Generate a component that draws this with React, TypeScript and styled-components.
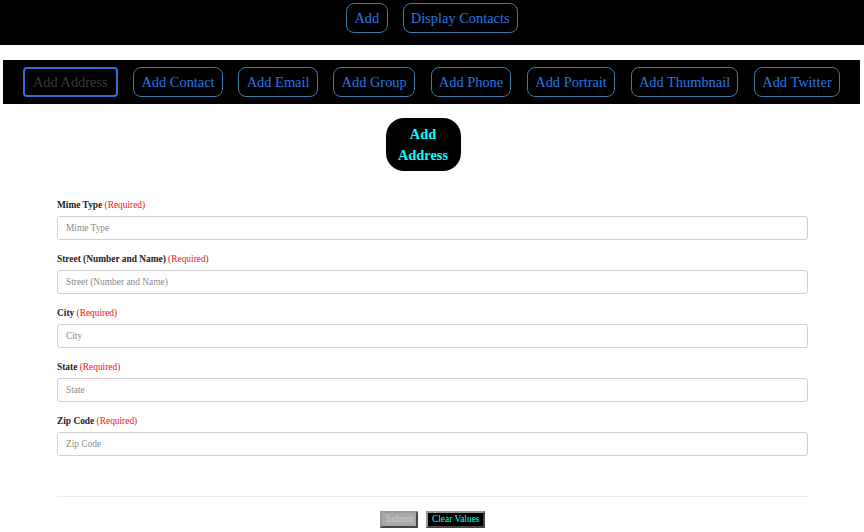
import React from "react";
import styled, { createGlobalStyle } from "styled-components";

const Global = createGlobalStyle`
  body { margin: 0; background: #fff; font-family: "Liberation Serif", "Times New Roman", serif; }
  * { box-sizing: border-box; }
`;

const TopBar = styled.nav`
  background: #000;
  height: 45px;
  display: flex;
  justify-content: center;
  align-items: flex-start;
  gap: 15px;
  padding-top: 3px;
`;

const SubBar = styled.nav`
  background: #000;
  margin: 15px 4px 0 3px;
  height: 44px;
  display: flex;
  justify-content: center;
  align-items: center;
  gap: 15.5px;
`;

const NavButton = styled.button<{ $active?: boolean }>`
  height: 30px;
  padding: 0 ${(p) => (p.$active ? "8px" : "7.3px")};
  background: #000;
  border: ${(p) => (p.$active ? "2px solid #2f6fd0" : "1px solid #3d7aa3")};
  border-radius: ${(p) => (p.$active ? "4px" : "8px")};
  font-family: "Liberation Serif", "Times New Roman", serif;
  font-size: 14.4px;
  color: ${(p) => (p.$active ? "#3a3a3a" : "#2478e0")};
  white-space: nowrap;
  cursor: pointer;
`;

const HeadingWrap = styled.div`
  display: flex;
  justify-content: center;
  margin-top: 14px;
  padding-right: 18px;
`;

const Heading = styled.h2`
  margin: 0;
  background: #000;
  color: #00ffff;
  font-family: "Liberation Serif", "Times New Roman", serif;
  font-size: 14.4px;
  font-weight: bold;
  line-height: 21px;
  text-align: center;
  width: 75px;
  height: 53px;
  padding-top: 5.5px;
  border-radius: 18px;
`;

const Form = styled.form`
  margin: 28px 56px 0 57px;
  display: flex;
  flex-direction: column;
`;

const Group = styled.div`
  display: flex;
  flex-direction: column;
  margin-bottom: 13px;
`;

const Label = styled.label`
  font-size: 9.4px;
  line-height: 13px;
  font-weight: bold;
  color: #222;
  margin-bottom: 4px;
`;

const Required = styled.span`
  color: #ee1111;
  font-weight: normal;
`;

const Input = styled.input`
  height: 24px;
  border: 1px solid #cfcfcf;
  border-radius: 3px;
  padding: 0 8px;
  font-family: "Liberation Serif", "Times New Roman", serif;
  font-size: 9.4px;
  color: #333;
  &::placeholder { color: #8a8a8a; }
`;

const Rule = styled.hr`
  border: none;
  border-top: 1px solid #ececec;
  margin: 27px 0 14px;
  width: 100%;
`;

const Actions = styled.div`
  display: flex;
  justify-content: center;
  gap: 8px;
`;

const ActionButton = styled.button<{ $kind: "submit" | "clear" }>`
  height: 17px;
  padding: 0 4px;
  font-family: "Liberation Serif", "Times New Roman", serif;
  font-size: 9.4px;
  line-height: 13px;
  white-space: nowrap;
  border: 2px outset #9a9a9a;
  background: ${(p) => (p.$kind === "submit" ? "#a8a8a8" : "#000")};
  color: ${(p) => (p.$kind === "submit" ? "#d0d0d0" : "#00ffff")};
  width: ${(p) => (p.$kind === "submit" ? "38px" : "59px")};
`;

const fields = [
  "Mime Type",
  "Street (Number and Name)",
  "City",
  "State",
  "Zip Code",
];

const tabs = [
  "Add Address",
  "Add Contact",
  "Add Email",
  "Add Group",
  "Add Phone",
  "Add Portrait",
  "Add Thumbnail",
  "Add Twitter",
];

export default function App() {
  return (
    <>
      <Global />
      <TopBar>
        <NavButton>Add</NavButton>
        <NavButton>Display Contacts</NavButton>
      </TopBar>
      <SubBar>
        {tabs.map((t, i) => (
          <NavButton key={t} $active={i === 0}>
            {t}
          </NavButton>
        ))}
      </SubBar>
      <HeadingWrap>
        <Heading>
          Add
          <br />
          Address
        </Heading>
      </HeadingWrap>
      <Form onSubmit={(e) => e.preventDefault()}>
        {fields.map((f) => (
          <Group key={f}>
            <Label>
              {f} <Required>(Required)</Required>
            </Label>
            <Input placeholder={f} />
          </Group>
        ))}
        <Rule />
        <Actions>
          <ActionButton $kind="submit" type="submit" disabled>
            Submit
          </ActionButton>
          <ActionButton $kind="clear" type="button">
            Clear Values
          </ActionButton>
        </Actions>
      </Form>
    </>
  );
}
